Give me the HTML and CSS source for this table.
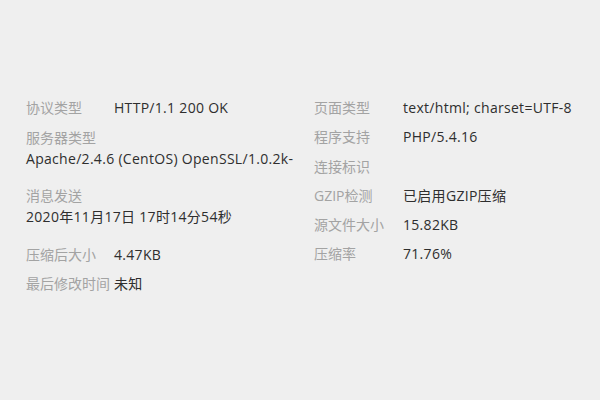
FILE: index.html
```html
<!DOCTYPE html>
<html lang="zh-CN">
<head>
<meta charset="utf-8">
<link rel="stylesheet" href="styles.css">
</head>
<body>
<div class="info">
  <div class="col col-left">
    <div class="row"><span class="label">协议类型</span><span class="value">HTTP/1.1 200 OK</span></div>
    <div class="row stack"><span class="label">服务器类型</span><span class="value">Apache/2.4.6 (CentOS) OpenSSL/1.0.2k-</span></div>
    <div class="row stack"><span class="label">消息发送</span><span class="value">2020年11月17日 17时14分54秒</span></div>
    <div class="row"><span class="label">压缩后大小</span><span class="value">4.47KB</span></div>
    <div class="row"><span class="label">最后修改时间</span><span class="value">未知</span></div>
  </div>
  <div class="col col-right">
    <div class="row"><span class="label">页面类型</span><span class="value">text/html; charset=UTF-8</span></div>
    <div class="row"><span class="label">程序支持</span><span class="value">PHP/5.4.16</span></div>
    <div class="row"><span class="label">连接标识</span><span class="value"></span></div>
    <div class="row"><span class="label">GZIP检测</span><span class="value">已启用GZIP压缩</span></div>
    <div class="row"><span class="label">源文件大小</span><span class="value">15.82KB</span></div>
    <div class="row"><span class="label">压缩率</span><span class="value">71.76%</span></div>
  </div>
</div>
</body>
</html>
```
FILE: styles.css
```css
html, body {
  margin: 0;
  padding: 0;
  background: #efefef;
}
body {
  width: 600px;
  height: 400px;
  font-family: "Open Sans", "Noto Sans CJK SC", sans-serif;
  font-size: 14px;
  color: #2e2e2e;
}
.info {
  display: flex;
  padding: 97px 0 0 26px;
}
.col {
  display: flex;
  flex-direction: column;
  gap: 8.5px;
}
.col-left {
  width: 288px;
}
.col-right {
  gap: 8.3px;
}
.row {
  display: flex;
  line-height: 21px;
  height: 21px;
  white-space: nowrap;
}
.row.stack {
  flex-direction: column;
  height: auto;
  margin-bottom: 8px;
}
.label {
  color: #a3a3a3;
  width: 88px;
  flex: none;
}
.col-right .label {
  width: 89px;
}
.value {
  color: #2e2e2e;
  letter-spacing: 0.3px;
}
```
